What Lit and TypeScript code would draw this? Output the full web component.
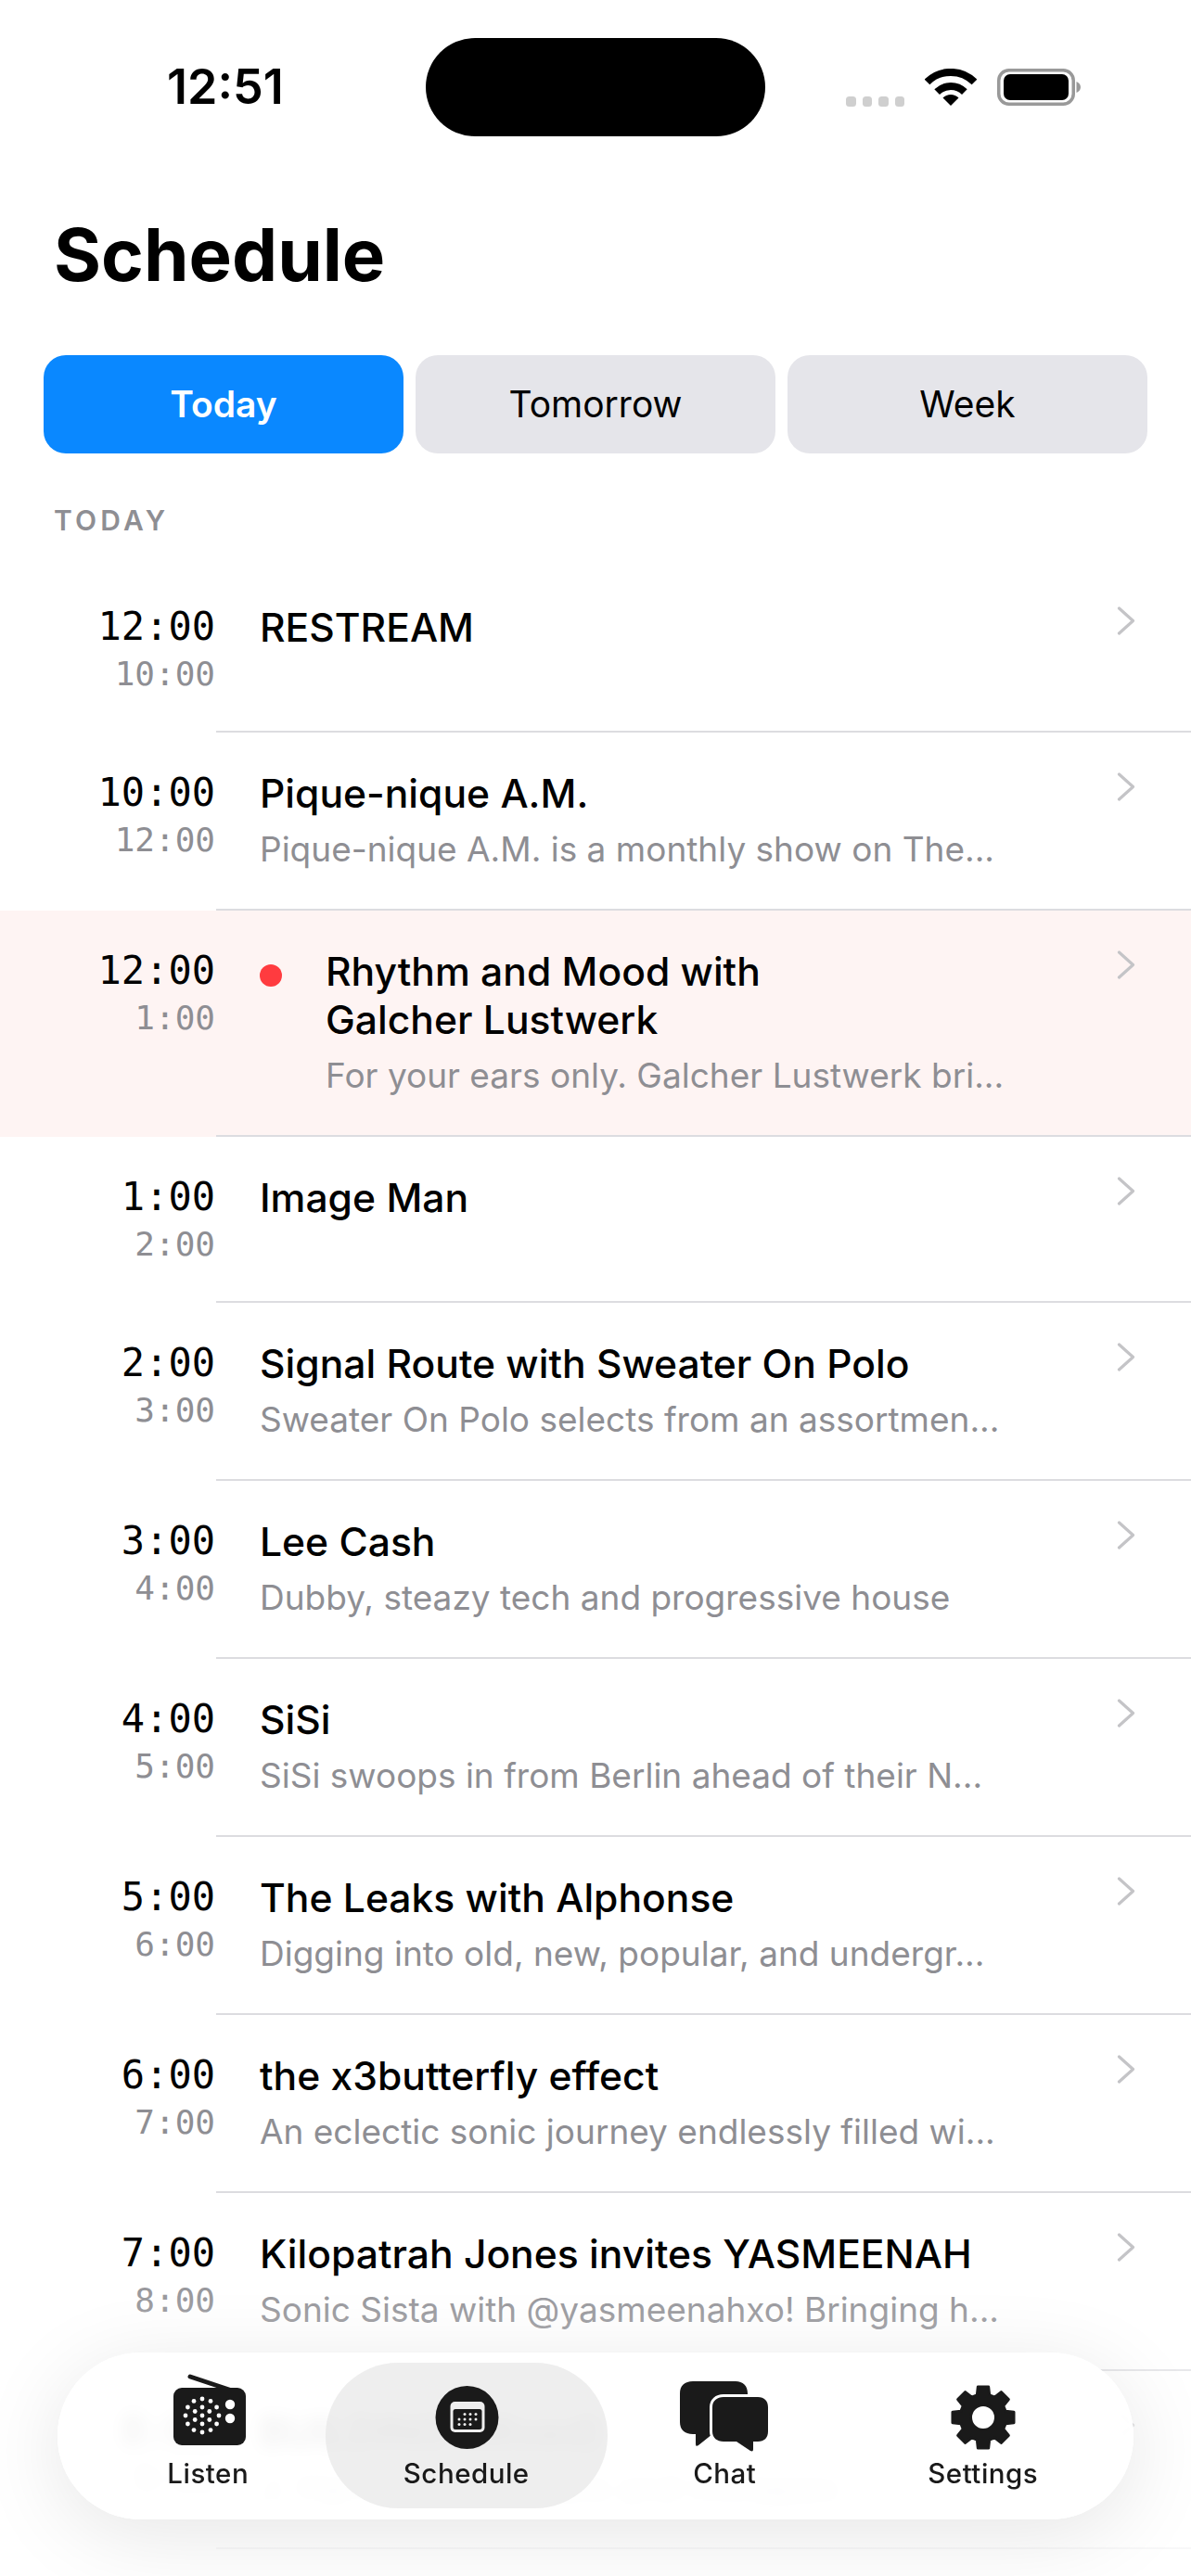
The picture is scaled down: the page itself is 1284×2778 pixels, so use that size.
import { html, css, svg, LitElement } from "lit";
import { customElement } from "lit/decorators.js";
import { classMap } from "lit/directives/class-map.js";

type Show = { start: string; end: string; title: string; sub?: string; live?: boolean };

const SHOWS: Show[] = [
    { start: "12:00", end: "10:00", title: "RESTREAM" },
    { start: "10:00", end: "12:00", title: "Pique-nique A.M.", sub: "Pique-nique A.M. is a monthly show on The..." },
    { start: "12:00", end: "1:00", title: "Rhythm and Mood with Galcher Lustwerk", sub: "For your ears only. Galcher Lustwerk bri...", live: true },
    { start: "1:00", end: "2:00", title: "Image Man" },
    { start: "2:00", end: "3:00", title: "Signal Route with Sweater On Polo", sub: "Sweater On Polo selects from an assortmen..." },
    { start: "3:00", end: "4:00", title: "Lee Cash", sub: "Dubby, steazy tech and progressive house" },
    { start: "4:00", end: "5:00", title: "SiSi", sub: "SiSi swoops in from Berlin ahead of their N..." },
    { start: "5:00", end: "6:00", title: "The Leaks with Alphonse", sub: "Digging into old, new, popular, and undergr..." },
    { start: "6:00", end: "7:00", title: "the x3butterfly effect", sub: "An eclectic sonic journey endlessly filled wi..." },
    { start: "7:00", end: "8:00", title: "Kilopatrah Jones invites YASMEENAH", sub: "Sonic Sista with @yasmeenahxo! Bringing h..." },
    { start: "8:00", end: "9:00", title: "BUILDING (Mixed)", sub: "J. Hart brings DJ sets and mixtapes" },
];

// speaker holes of the radio: one centre dot and two rings
function speakerDots() {
    const dots: [number, number][] = [[44, 45]];
    for (const [count, r] of [[6, 9], [12, 18]]) {
        for (let i = 0; i < count; i++) {
            const a = (i / count) * Math.PI * 2 - Math.PI / 2;
            dots.push([44 + Math.cos(a) * r, 45 + Math.sin(a) * r]);
        }
    }
    return dots;
}

function gearPath(cx: number, cy: number) {
    const teeth = 8;
    const outer = 33.5;
    const root = 25;
    let d = "";
    for (let i = 0; i < teeth; i++) {
        const a = (i / teeth) * Math.PI * 2 - Math.PI / 2;
        const pts: [number, number][] = [
            [root, a - 0.27],
            [outer, a - 0.17],
            [outer, a + 0.17],
            [root, a + 0.27],
        ];
        for (const [r, t] of pts) {
            d += `${d ? "L" : "M"}${(cx + Math.cos(t) * r).toFixed(2)} ${(cy + Math.sin(t) * r).toFixed(2)}`;
        }
    }
    d += `Z M${cx + 13.5} ${cy} A13.5 13.5 0 1 0 ${cx - 13.5} ${cy} A13.5 13.5 0 1 0 ${cx + 13.5} ${cy}Z`;
    return d;
}

const listenIcon = svg`
    <line x1="31" y1="3" x2="76" y2="18" stroke="#1a1a1a" stroke-width="5" stroke-linecap="round" />
    <rect x="13" y="15" width="78" height="62" rx="9" fill="#1a1a1a" />
    ${speakerDots().map(([x, y]) => svg`<circle cx=${x} cy=${y} r="2.4" fill="#fff" />`)}
    <circle cx="74" cy="33" r="5.2" fill="#fff" />
    <circle cx="74" cy="48" r="5.2" fill="#fff" />
`;

const calendarDots: [number, number][] = [
    [48, 43.5], [54, 43.5], [60, 43.5],
    [42, 49], [48, 49], [54, 49], [60, 49],
    [42, 54.5], [48, 54.5], [54, 54.5],
];

const scheduleIcon = svg`
    <circle cx="50.5" cy="47" r="34" fill="#1a1a1a" />
    <rect x="32.5" y="30" width="37" height="33" rx="5" fill="#eee" />
    <rect x="35.5" y="38" width="31" height="22" rx="2.5" fill="#1a1a1a" />
    ${calendarDots.map(([x, y]) => svg`<circle cx=${x} cy=${y} r="1.5" fill="#eee" />`)}
`;

const chatIcon = svg`
    <path d="M16 8H62C70 8 75 13 75 21V52C75 60 70 65 62 65H37L22 77C20 78.5 19 78 19 75V65H16C7 65 2 60 2 52V21C2 13 7 8 16 8Z" fill="#1a1a1a" />
    <path d="M49 25H86C93 25 97 29 97 36V62C97 69 93 73 86 73H81V81C81 83.5 80 84 78 83L63 73H49C42 73 37 69 37 62V36C37 29 42 25 49 25Z" fill="#1a1a1a" stroke="#fff" stroke-width="6" paint-order="stroke" />
`;

const settingsIcon = svg`
    <path d=${gearPath(50, 47)} fill="#1a1a1a" fill-rule="evenodd" stroke="#1a1a1a" stroke-width="3" stroke-linejoin="round" />
`;

const TABS = [
    { label: "Listen", icon: listenIcon },
    { label: "Schedule", icon: scheduleIcon, active: true },
    { label: "Chat", icon: chatIcon },
    { label: "Settings", icon: settingsIcon },
];

@customElement("app-root")
export class AppRoot extends LitElement {
    static styles = css`
        :host {
            display: block;
            position: relative;
            width: 1284px;
            height: 2778px;
            overflow: hidden;
            background: #fff;
            color: #000;
            font-family: Inter, "Liberation Sans", sans-serif;
        }

        .status {
            display: flex;
            align-items: center;
            padding: 41px 0 0 180px;
        }

        .clock {
            width: 279px;
            font-size: 52px;
            font-weight: 600;
            line-height: 60px;
        }

        .island {
            width: 366px;
            height: 106px;
            border-radius: 53px;
            background: #000;
        }

        .indicators {
            display: flex;
            align-items: flex-end;
            gap: 22px;
            margin-left: 87px;
        }

        .signal {
            display: flex;
            gap: 7px;
            height: 10px;
        }

        .signal span {
            width: 10.5px;
            height: 10.5px;
            border-radius: 3.5px;
            background: #cfcfcf;
        }

        .indicators svg {
            display: block;
        }

        h1 {
            margin: 80px 0 0 58px;
            font-size: 78px;
            font-weight: 700;
            line-height: 96px;
        }

        .tabs {
            display: flex;
            gap: 13px;
            margin: 60px 47px 0;
        }

        .tab {
            flex: 1;
            height: 106px;
            border-radius: 24px;
            background: #e5e5ea;
            font-size: 39px;
            line-height: 106px;
            text-align: center;
        }

        .tab.on {
            background: #0a88ff;
            color: #fff;
            font-weight: 600;
        }

        .section {
            margin: 54px 0 32px 58px;
            color: #8e8e93;
            font-size: 30px;
            font-weight: 600;
            letter-spacing: 4.2px;
            line-height: 36px;
        }

        .row {
            display: grid;
            grid-template-columns: 233px 1fr;
        }

        .row.live {
            background: #fef4f3;
        }

        .times {
            padding: 39px 1px 0 0;
            font-family: "DejaVu Sans Mono", "Liberation Mono", monospace;
            text-align: right;
        }

        .start {
            font-size: 42px;
            line-height: 52px;
        }

        .end {
            margin-top: 3px;
            color: #8e8e93;
            font-size: 36px;
            line-height: 44px;
        }

        .main {
            display: flex;
            align-items: flex-start;
            box-sizing: border-box;
            min-height: 179px;
            padding: 40px 60px 41px 47px;
            border-bottom: 2px solid #dcdce0;
        }

        .dot {
            flex: none;
            width: 24px;
            height: 24px;
            margin: 18px 47px 0 0;
            border-radius: 50%;
            background: #ff3b3f;
        }

        .text {
            flex: 1;
            min-width: 0;
        }

        .title {
            font-size: 42.6px;
            font-weight: 450;
            line-height: 52px;
        }

        .live .title {
            max-width: 600px;
        }

        .sub {
            margin-top: 11px;
            color: #8e8e93;
            font-size: 37px;
            line-height: 46px;
            white-space: nowrap;
        }

        .chevron {
            flex: none;
            display: block;
            margin-top: 3px;
        }

        .fade {
            position: absolute;
            left: 0;
            right: 0;
            top: 2440px;
            bottom: 0;
            background: linear-gradient(rgba(255, 255, 255, 0), rgba(255, 255, 255, 0.5) 50%, rgba(255, 255, 255, 0.85));
        }

        .bar {
            position: absolute;
            left: 62px;
            top: 2537px;
            box-sizing: border-box;
            display: grid;
            grid-template-columns: repeat(4, 1fr);
            width: 1160px;
            height: 180px;
            padding: 23px 23px 0;
            border-radius: 90px;
            background: rgba(255, 255, 255, 0.86);
            box-shadow:
                0 16px 90px rgba(0, 0, 0, 0.1),
                inset 0 0 0 4px rgba(255, 255, 255, 0.9);
            backdrop-filter: blur(9px);
        }

        .item {
            position: relative;
            display: flex;
            flex-direction: column;
            align-items: center;
        }

        .item.on::before {
            content: "";
            position: absolute;
            left: -13px;
            right: -13px;
            top: -12px;
            height: 157px;
            border-radius: 78px;
            background: rgba(224, 224, 224, 0.55);
        }

        .item svg {
            position: relative;
            display: block;
        }

        .label {
            position: relative;
            margin-top: 4px;
            color: #1a1a1a;
            font-size: 29.5px;
            font-weight: 500;
            letter-spacing: 0.5px;
            line-height: 36px;
        }
    `;

    renderRow(s: Show) {
        return html`
            <div class="row ${classMap({ live: !!s.live })}">
                <div class="times">
                    <div class="start">${s.start}</div>
                    <div class="end">${s.end}</div>
                </div>
                <div class="main">
                    ${s.live ? html`<span class="dot"></span>` : ""}
                    <div class="text">
                        <div class="title">${s.title}</div>
                        ${s.sub ? html`<div class="sub">${s.sub}</div>` : ""}
                    </div>
                    <svg class="chevron" width="20" height="31" viewBox="0 0 20 31" fill="none">
                        <path d="M2.5 2L17.5 15.5L2.5 29" stroke="#c4c4c7" stroke-width="3.2" stroke-linecap="round" stroke-linejoin="round" />
                    </svg>
                </div>
            </div>
        `;
    }

    render() {
        return html`
            <div class="status">
                <div class="clock">12:51</div>
                <div class="island"></div>
                <div class="indicators">
                    <div class="signal"><span></span><span></span><span></span><span></span></div>
                    <svg width="56" height="40" viewBox="0 0 56 40">
                        <path d="M2.5 14.5A36 36 0 0 1 53.5 14.5M13.15 25.15A21 21 0 0 1 42.85 25.15" fill="none" stroke="#000" stroke-width="8" />
                        <path d="M28 40L19.5 31.5A12 12 0 0 1 36.5 31.5Z" fill="#000" />
                    </svg>
                    <svg width="90" height="40" viewBox="0 0 90 40">
                        <rect x="1.75" y="1.75" width="80.5" height="36.5" rx="11" fill="none" stroke="#999" stroke-width="3.5" />
                        <rect x="7" y="6" width="70" height="28" rx="7" fill="#000" />
                        <path d="M85.5 14C88 15 90 17 90 20C90 23 88 25 85.5 26Z" fill="#999" />
                    </svg>
                </div>
            </div>
            <h1>Schedule</h1>
            <div class="tabs">
                <div class="tab on">Today</div>
                <div class="tab">Tomorrow</div>
                <div class="tab">Week</div>
            </div>
            <div class="section">TODAY</div>
            ${SHOWS.map((s) => this.renderRow(s))}
            <div class="fade"></div>
            <nav class="bar">
                ${TABS.map(
                    (t) => html`
                        <div class="item ${classMap({ on: !!t.active })}">
                            <svg width="100" height="85" viewBox="0 0 100 85">${t.icon}</svg>
                            <span class="label">${t.label}</span>
                        </div>
                    `,
                )}
            </nav>
        `;
    }
}
